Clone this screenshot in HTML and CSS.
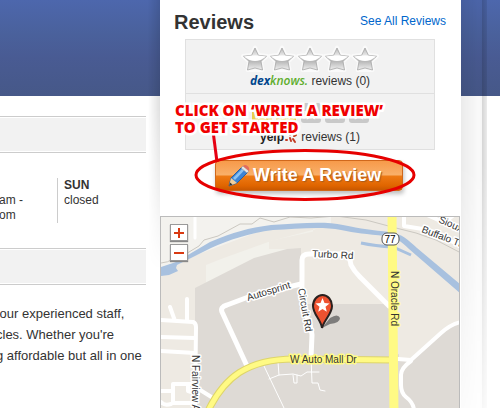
FILE: index.html
```
<!DOCTYPE html>
<html lang="en">
<head>
    <meta charset="UTF-8">
    <meta name="viewport" content="width=device-width, initial-scale=1.0">
    <link rel="stylesheet" href="styles.css">
    <title>Reviews</title>
</head>
<body>
    <svg class="defs" width="0" height="0">
        <defs>
            <linearGradient id="starfill" x1="0" y1="0" x2="0" y2="1">
                <stop offset="0" stop-color="#b8b8b8"/>
                <stop offset=".4" stop-color="#f2f2f2"/>
                <stop offset=".58" stop-color="#b4b4b4"/>
                <stop offset="1" stop-color="#f0f0f0"/>
            </linearGradient>
            <g id="star">
                <path d="M14 2.500l3.600 7.500 8.400 1-6.200 5.800 1.600 8.200H6.600l1.600-8.200L2 11l8.400-1z" fill="#fff" stroke="#fafafa" stroke-width="4" stroke-linejoin="round"/>
                <path d="M14 3l3.400 7.300 8.100 1-5.500 5 1.500 8.700-7.500-2-7.500 2 1.500-8.700-5.500-5 8.100-1z" fill="url(#starfill)" stroke="#a6a6a6" stroke-width=".8" stroke-linejoin="round"/>
                <path d="M3 11.600q11-2 22 0l-5.500 3.400q-5.500 2-11 0z" fill="#fff"/>
            </g>
            <path id="ministar" d="M10 3l2 5 5 .4-4 3.300 1.300 5L10 14l-4.300 2.700 1.300-5-4-3.300 5-.4z" fill="#fff"/>
        </defs>
    </svg>

    <div id="page">
        <div id="main">
            <div class="bar"></div>
            <div class="hours">
                <div class="day"><br>am -<br>om</div>
                <div class="day sunday"><b>SUN</b><br>closed</div>
            </div>
            <div class="bar"></div>
            <p class="about">&nbsp;our experienced staff,<br>cles. Whether you're<br>g affordable but all in one</p>
        </div>

        <div id="side">
            <div class="title">
                <h2>Reviews</h2>
                <a href="#">See All Reviews</a>
            </div>
            <div class="ratings">
                <div class="rating">
                    <svg class="stars" width="138" height="28" viewBox="0 0 138 28">
                        <use href="#star" x="0"/><use href="#star" x="27"/><use href="#star" x="55"/><use href="#star" x="82"/><use href="#star" x="110"/>
                    </svg>
                    <div><span class="dex">dex</span><span class="knows">knows.</span> reviews (0)</div>
                </div>
                <div class="rating yelp-row">
                    <svg class="ministars" width="117" height="20" viewBox="0 0 117 20">
                        <rect width="20" height="20" rx="3" fill="#e8cf4a"/><use href="#ministar" x="0"/>
                        <rect x="24" width="20" height="20" rx="3" fill="#e8cf4a"/><use href="#ministar" x="24"/>
                        <rect x="49" width="20" height="20" rx="3" fill="#c9c9c9"/><use href="#ministar" x="49"/>
                        <rect x="73" width="20" height="20" rx="3" fill="#c9c9c9"/><use href="#ministar" x="73"/>
                        <rect x="97" width="20" height="20" rx="3" fill="#c9c9c9"/><use href="#ministar" x="97"/>
                    </svg>
                    <div><span class="yelp">yelp</span><svg class="burst" width="14" height="14" viewBox="0 0 14 14"><path d="M2 10h1M6 8l1 3M9 9l2 3M10 6l2-1M6 5V3" stroke="#c23a22" stroke-width="2" stroke-linecap="round"/></svg> reviews (1)</div>
                </div>
            </div>

            <div class="action">
                <button id="write-btn">
                    <svg width="22" height="24" viewBox="0 0 22 24">
                        <path d="M1 22l2-8 11-11 6 5-11 11z" fill="#3d84d4" stroke="#2c5f9d"/>
                        <path d="M5 14l10-10 2 1.500L7 16z" fill="#8cc3f2"/>
                        <path d="M1 22l2-8 6 5z" fill="#f1cf9c"/>
                        <path d="M1 22l1-3.500 2.500 2z" fill="#333"/>
                        <path d="M13 4l2-2 6 5-2 2z" fill="#e5e5e5" stroke="#888" stroke-width=".5"/>
                        <path d="M15 2q2-2 4.500 0t1.500 5z" fill="#e36b5c"/>
                    </svg>
                    Write A Review
                </button>
                <!-- hint drawn over the button -->
                <svg class="circle" width="224" height="74" viewBox="0 0 224 74">
                    <path d="M20 3l4 31" stroke="#e60012" stroke-width="3"/>
                    <ellipse cx="112" cy="47" rx="109" ry="24.500" fill="none" stroke="#e60000" stroke-width="3"/>
                </svg>
                <div class="hint">CLICK ON ‘WRITE A REVIEW’<br>TO GET STARTED</div>
            </div>

            <div id="map">
                <svg class="tiles" viewBox="160 217 298 191" preserveAspectRatio="xMidYMin slice">
                    <rect x="150" y="210" width="320" height="210" fill="#eeeae3"/>
                    <path d="M160 217H330V226L262 230 190 257 160 275z" fill="#f3f2ee"/>
                    <path d="M205 265l15-6 50-18 45-12h-3v16l-30 8-44 14-23 14-10 3z" fill="#f2f1eb"/>
                    <path d="M268 241l47-10v18h-47z" fill="#eeeae3"/>
                    <path d="M194 288l59-30 33-9 14-1v56h90v54l70-36v100H194z" fill="#dedad5"/>
                    <path d="M398 305h62v18q-12 2-20 10l-30 27h-12z" fill="#eeeae3"/>
                    <path d="M160 267l15-5 34-20c24-10 38-14 61-17 30-2 55-4 72 0 18 4 30 5 46 7 14 2 19 8 28 16l44 37v9l-52-45c-8-8-12-11-24-13-18-2-30-3-44-6-20-4-45-1-68 0-24 3-44 10-62 18l-34 17-1 3 2 3-9 4-8 1z" fill="#a8c1df"/>
                    <path d="M360 243q14 3 32 4l18 8" fill="none" stroke="#a8c1df" stroke-width="3"/>
                    <g fill="none" stroke="#cbc8c1">
                        <path d="M160 263q8-1 10-3M183 255l15-9 5-6 14-4 22-12h12l8-6 14 4 16-5 21 1 25-2 30 4 30 8 20 5 20 7 25 13"/>
                    </g>
                    <!-- white roads -->
                    <g fill="none" stroke="#fff" stroke-linecap="round" stroke-linejoin="round">
                        <path stroke-width="3" d="M194 214v24"/>
                        <path stroke-width="5" d="M310 358l1-23q-1-10-5-18-6-20-5-40v-17q0-6 7-6h35q6 2 7 11 3 6 9 12l29 29"/>
                        <path stroke-width="5" d="M246 366l-25-54q-2-5 5-7l24-9 50-12"/>
                        <path stroke-width="4" d="M160 320l32 2q3 1 3 5l-1 81M160 337l34 1M160 351l34 2M169 307l5 14M186 299v22"/>
                        <path stroke-width="4" d="M196 388l16 10M160 391h12v-7h18M172 391v12h20M160 402q3 4 10 2M187 385v6l10 3"/>
                        <path stroke-width="4" d="M397 359l13 1 30-27q10-9 20-11M410 361q-10 7-10 14v10q0 8 5 12 8 6 8 14"/>
                        <path stroke-width="4" d="M403 214v12l25 4 32 16M424 214l36 16M444 222l10-8"/>
                        <path stroke-width="1" d="M263 366l20 42M277 362l1 13M268 379l10-4 14-1 8 2 6-4h12M292 375l1 8h3v-8M310 357l1 26h6l2 7 5 1"/>
                    </g>
                    <!-- highways -->
                    <g fill="none">
                        <path d="M391 214l2 200M392 360l-92-1c-55-2-78 20-94 54" stroke="#ded56a" stroke-width="7"/>
                        <path d="M391 214l2 200" stroke="#fffa84" stroke-width="9"/>
                        <path d="M392 360l-92-1c-55-2-78 20-94 54" stroke="#fffa84" stroke-width="5"/>
                    </g>
                    <g class="road">
                        <text x="311" y="257" transform="rotate(3 311 257)">Turbo Rd</text>
                        <text x="247" y="301" transform="rotate(-17 247 301)">Autosprint</text>
                        <text x="297" y="289" transform="rotate(80 297 289)">Circuit Rd</text>
                        <text x="191" y="355" transform="rotate(90 191 355)">N Fairview Av</text>
                        <text x="437" y="222" transform="rotate(24 437 222)">Sioux</text>
                        <text x="420" y="232" transform="rotate(21 420 232)">Buffalo Tra</text>
                    </g>
                    <g class="road highway">
                        <text x="289" y="363">W Auto Mall Dr</text>
                        <text x="390" y="271" transform="rotate(90 390 271)">N Oracle Rd</text>
                    </g>
                    <rect x="381" y="233" width="17" height="12" rx="5" fill="#fff" stroke="#555"/>
                    <text class="shield" x="389" y="243">77</text>
                    <!-- pin -->
                    <path d="M321 328l8-10q8-5 10 0 0 5-10 6z" fill="#555" opacity=".7"/>
                    <path d="M321 328c-1-8-9-14-9-22a9.500 11 0 0 1 19 0c0 8-8 14-10 22z" fill="#ee5230" stroke="#2b211f" stroke-width="2"/>
                    <path d="M321.500 298l2 5 5 .4-4 3.300 1.300 5-4.300-2.700-4.300 2.700 1.300-5-4-3.300 5-.4z" fill="#fff"/>
                </svg>
                <div class="zoom">
                    <button aria-label="Zoom in"><svg width="10" height="10"><path d="M0 5h10M5 0v10" stroke="#d93a12" stroke-width="2"/></svg></button>
                    <button aria-label="Zoom out"><svg width="10" height="10"><path d="M0 5h10" stroke="#d93a12" stroke-width="2"/></svg></button>
                </div>
            </div>
        </div>
    </div>
</body>
</html>
```
FILE: styles.css
```
body {
    margin: 0;
    background: #fff linear-gradient(#4d67ad, #4a619c 35%, #495b93 60%, #465888) no-repeat;
    background-size: 100% 96px;
    font-family: "Liberation Sans", Arial, sans-serif;
    font-size: 12px;
    line-height: 15px;
    color: #333;
}
.defs {
    position: absolute;
}
#page {
    display: flex;
    min-height: 100vh;
    padding-right: 39px;
    overflow: hidden;
}

/* left column */
#main {
    flex: 1;
    min-width: 0;
    padding: 116px 14px 0 0;
}
.bar {
    height: 33px;
    padding: 1px 0;
    background: #f2f2f2 content-box;
    border-top: 1px solid #ccc;
    border-bottom: 1px solid #ccc;
}
.hours {
    display: flex;
    height: 45px;
    padding: 25px 0;
}
.day {
    flex: 0 0 58px;
    margin-left: -1px;
}
.sunday {
    flex: 1;
    margin: 0;
    padding-left: 6px;
    border-left: 1px solid #ccc;
}
.about {
    margin: 18px 0 0 -4px;
    font-size: 13px;
    line-height: 21px;
    white-space: nowrap;
}

/* reviews column */
#side {
    position: relative;
    display: flex;
    flex-direction: column;
    flex: 0 0 301px;
    background: #fff;
}
#side::before,
#side::after {
    content: "";
    position: absolute;
    top: 0;
}
#side::before {
    left: -12px;
    width: 12px;
    height: 270px;
    background: linear-gradient(to right, transparent, rgba(0, 0, 0, .12));
    -webkit-mask-image: linear-gradient(#000 40%, transparent);
    mask-image: linear-gradient(#000 40%, transparent);
}
#side::after {
    left: 100%;
    width: 26px;
    height: 100%;
    background: linear-gradient(to right, rgba(0, 0, 0, .08), rgba(0, 0, 0, .02) 70%, rgba(0, 0, 0, .04) 80%, rgba(0, 0, 0, .16) 82%, rgba(0, 0, 0, .08));
    -webkit-mask-image: linear-gradient(#000 40%, rgba(0, 0, 0, .2));
    mask-image: linear-gradient(#000 40%, rgba(0, 0, 0, .2));
}
.title {
    display: flex;
    justify-content: space-between;
    align-items: center;
    height: 39px;
    padding: 0 15px 0 14px;
}
.title h2 {
    margin: 4px 0 0;
    font-size: 20px;
    line-height: 24px;
}
.title a {
    margin-top: 3px;
    color: #0066cc;
    text-decoration: none;
}
.ratings {
    margin: 0 26px 0 25px;
    border: 1px solid #e0e0e0;
    background: #f2f2f2;
    text-align: center;
}
.rating {
    height: 48px;
    padding-top: 5px;
}
.rating svg {
    display: block;
    margin: 0 auto;
}
.rating .ministars {
    margin-bottom: 7px;
}
.yelp-row {
    height: 46px;
    padding-top: 9px;
    border-top: 1px solid #e0e0e0;
}
.rating .burst {
    display: inline-block;
    vertical-align: -3px;
}
.dex, .knows {
    font-family: "Open Sans", sans-serif;
    font-style: italic;
    font-weight: bold;
    color: #00458c;
}
.knows {
    font-weight: 600;
    color: #5fae2e;
}
.yelp {
    font-weight: bold;
    color: #222;
}

/* button and the hint over it */
.action {
    position: relative;
    padding: 10px 0 25px 55px;
}
#write-btn {
    display: flex;
    align-items: center;
    gap: 3px;
    width: 188px;
    height: 31px;
    padding: 0 12px;
    border: 1px solid #d0681c;
    border-radius: 4px;
    background: linear-gradient(#f79a4a, #f9b06a 48%, #ee7a14 52%, #e06500 85%, #c95800);
    box-shadow: 1px 3px 4px rgba(0, 0, 0, .25);
    font: bold 18px "Liberation Sans", Arial, sans-serif;
    color: #fff;
    text-shadow: 1px 1px 1px #a85a1c;
    white-space: nowrap;
    cursor: pointer;
}
#write-btn svg {
    flex: none;
}
.circle {
    position: absolute;
    top: -22px;
    left: 33px;
    pointer-events: none;
}
.hint {
    position: absolute;
    top: -48px;
    left: 15px;
    font-family: "Open Sans", sans-serif;
    font-size: 15px;
    font-weight: 800;
    line-height: 17px;
    color: #f00000;
    white-space: nowrap;
    -webkit-text-stroke: 5px #fff;
    paint-order: stroke fill;
}

/* map */
#map {
    position: relative;
    flex: 1;
    margin-right: 1px;
    border: 1px solid #bbb;
    border-bottom: none;
    overflow: hidden;
}
.tiles {
    display: block;
    width: 100%;
}
.road {
    font-size: 10px;
    fill: #333;
    stroke: #fff;
    stroke-width: 3px;
    stroke-linejoin: round;
    paint-order: stroke;
}
.highway {
    stroke: #fffa84;
}
.shield {
    font-size: 10px;
    text-anchor: middle;
}
.zoom {
    position: absolute;
    top: 7px;
    left: 9px;
    display: grid;
    gap: 3px;
}
.zoom button {
    display: grid;
    place-items: center;
    width: 18px;
    height: 17px;
    padding: 0;
    border: 1px solid #999;
    background: #fff;
    box-shadow: 0 1px 1px #888;
}
```
